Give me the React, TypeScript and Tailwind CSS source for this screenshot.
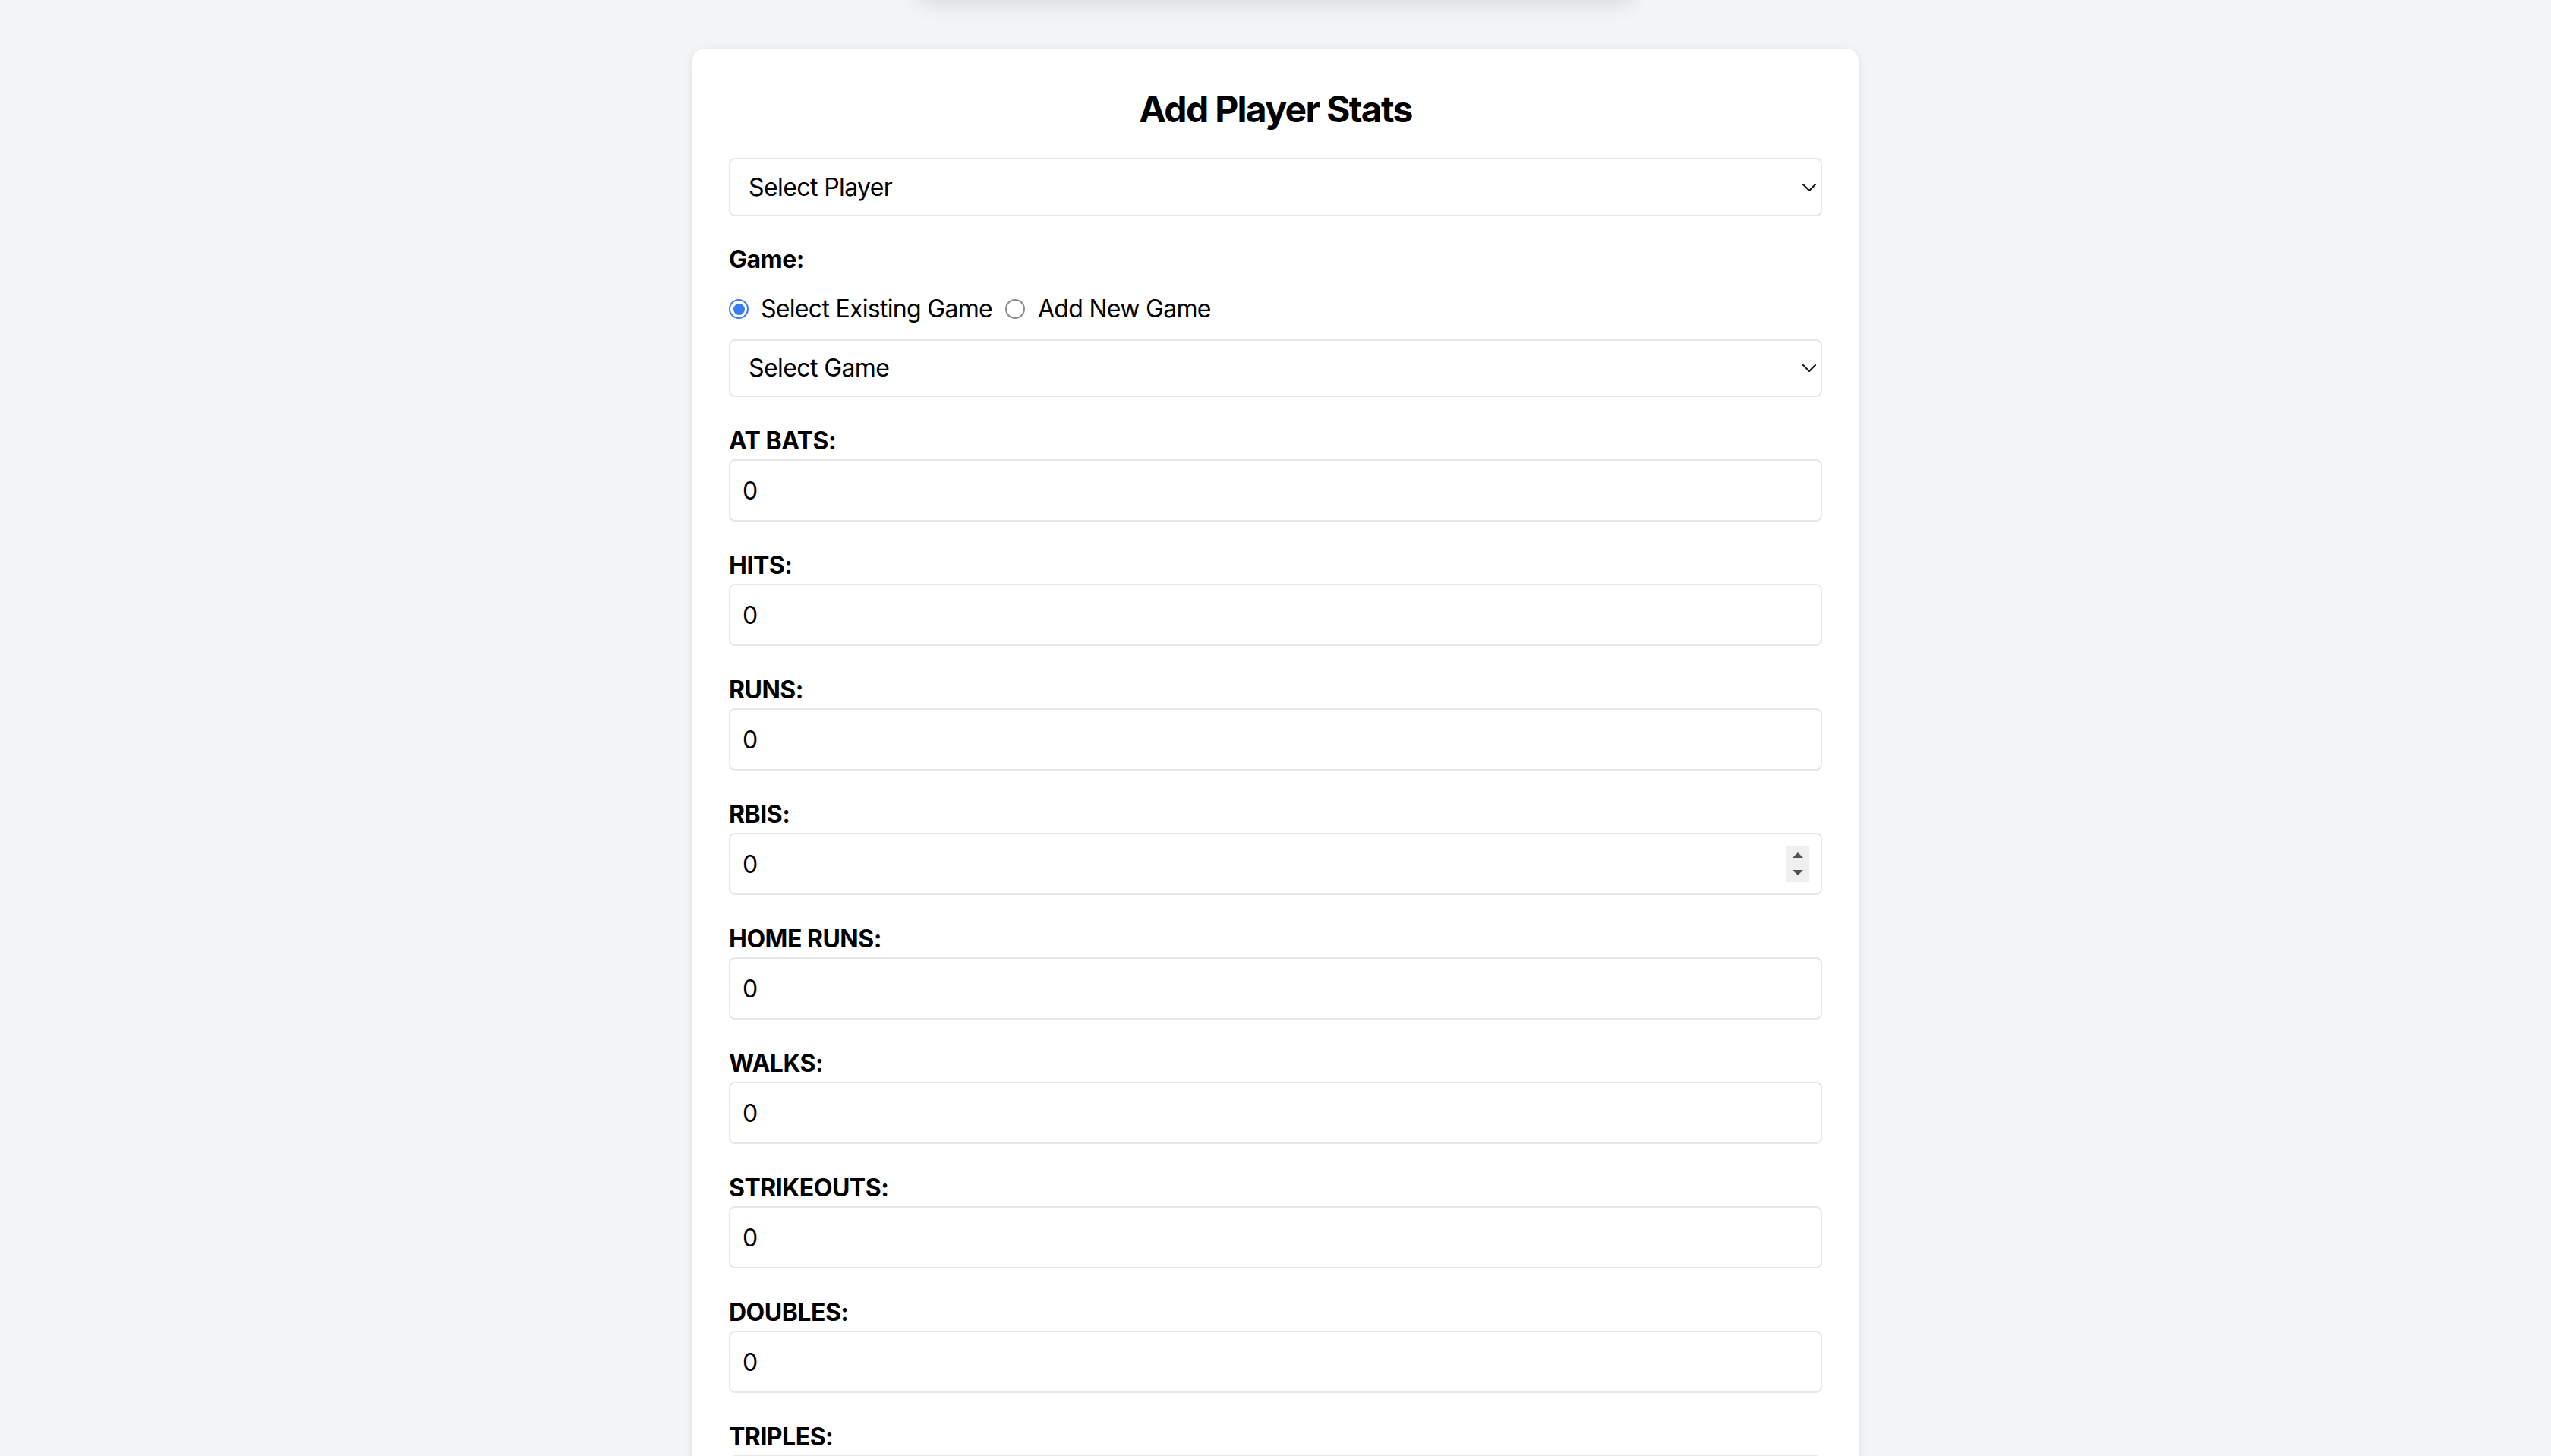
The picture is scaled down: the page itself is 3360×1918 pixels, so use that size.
import React from "react";

const fields = [
  "AT BATS:",
  "HITS:",
  "RUNS:",
  "RBIS:",
  "HOME RUNS:",
  "WALKS:",
  "STRIKEOUTS:",
  "DOUBLES:",
  "TRIPLES:",
  "SINGLES:",
];

function Chevron() {
  return (
    <svg width="18" height="11" viewBox="0 0 18 11" fill="none" className="pointer-events-none absolute right-[8px] top-1/2 -translate-y-1/2">
      <path d="M1 1.5 L9 9.5 L17 1.5" stroke="#1a1a1a" strokeWidth="2.2" strokeLinecap="round" strokeLinejoin="round" />
    </svg>
  );
}

function SelectBox({ label, h }: { label: string; h: string }) {
  return (
    <div className="relative">
      <select
        className={`block w-full appearance-none rounded-[8px] border-2 border-[#e5e7eb] bg-white pl-[24px] pr-[40px] text-[32px] leading-[40px] tracking-[-0.6px] text-black outline-none ${h}`}
        defaultValue=""
      >
        <option value="">{label}</option>
      </select>
      <Chevron />
    </div>
  );
}

function Radio({ checked }: { checked: boolean }) {
  return checked ? (
    <span className="flex h-[26px] w-[26px] shrink-0 items-center justify-center rounded-full border-[2px] border-[#3b7cf3] bg-white">
      <span className="h-[15px] w-[15px] rounded-full bg-[#3b7cf3]" />
    </span>
  ) : (
    <span className="h-[26px] w-[26px] shrink-0 rounded-full border-[2px] border-[#8a8a8a] bg-white" />
  );
}

function Spinner() {
  return (
    <div className="pointer-events-none absolute right-[17px] top-1/2 flex h-[48px] w-[30px] -translate-y-1/2 flex-col items-center justify-center gap-[16px] bg-[#efefef]">
      <span className="h-0 w-0 border-x-[7px] border-b-[7px] border-x-transparent border-b-[#505050]" />
      <span className="h-0 w-0 border-x-[7px] border-t-[7px] border-x-transparent border-t-[#505050]" />
    </div>
  );
}

export default function App() {
  return (
    <div className="h-[1918px] overflow-hidden bg-[#f3f4f6] font-['Inter','Noto_Sans',sans-serif] text-black">
      <div className="mx-auto -mt-[104px] h-[100px] w-[940px] rounded-[16px] bg-[#f3f4f6] shadow-[0_10px_28px_rgba(0,0,0,0.11)]" />
      <div className="mx-auto mt-[68px] w-[1536px] rounded-[16px] bg-white p-[48px] shadow-[0_4px_14px_rgba(0,0,0,0.08),0_2px_6px_rgba(0,0,0,0.04)]">
        <h2 className="mb-[32px] text-center text-[48px] font-bold leading-[64px] tracking-[-1.7px]">Add Player Stats</h2>
        <SelectBox label="Select Player" h="h-[77px]" />

        <div className="mt-[33px] h-[48px] text-[32px] font-bold leading-[48px] tracking-[-0.5px]">Game:</div>
        <div className="mt-[17px] mb-[16px] flex h-[48px] items-center text-[32px] leading-[48px] tracking-[-0.7px]">
          <label className="mr-[17px] flex items-center">
            <Radio checked />
            <span className="ml-[16px]">Select Existing Game</span>
          </label>
          <label className="flex items-center">
            <Radio checked={false} />
            <span className="ml-[17px]">Add New Game</span>
          </label>
        </div>
        <SelectBox label="Select Game" h="h-[76px]" />

        {fields.map((f) => (
          <div key={f} className="mt-[34px]">
            <label className="block h-[48px] text-[32px] font-bold leading-[48px] tracking-[-0.5px]">{f}</label>
            <div className="relative">
              <input
                type="text"
                defaultValue="0"
                className="block h-[82px] w-full rounded-[8px] border-2 border-[#e5e7eb] bg-white px-[16px] text-[32px] text-black outline-none"
              />
              {f === "RBIS:" && <Spinner />}
            </div>
          </div>
        ))}
      </div>
    </div>
  );
}
